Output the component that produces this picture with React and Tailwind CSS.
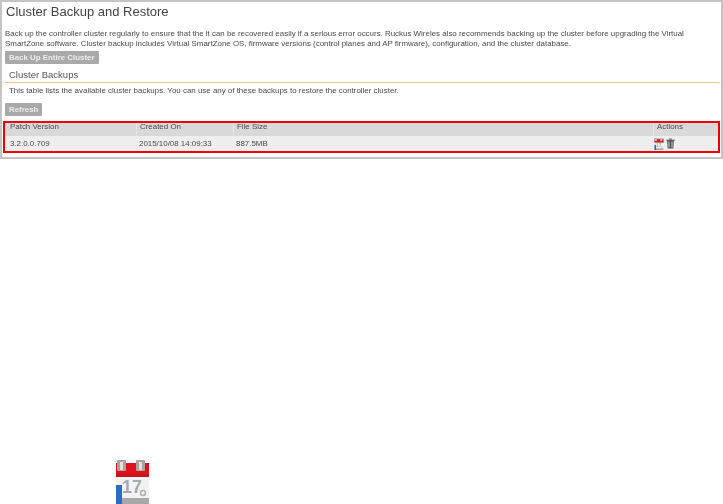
import React from "react";

function CalendarIcon({ className }) {
  return (
    <svg viewBox="0 0 33 44" className={className}>
      <rect x="0" y="3" width="33" height="14" fill="#e0101c" />
      <rect x="0" y="14" width="33" height="3" fill="#c4141c" />
      <rect x="1" y="0" width="9" height="11" rx="1" fill="#a8a4a0" />
      <rect x="20" y="0" width="9" height="11" rx="1" fill="#a8a4a0" />
      <rect x="4" y="2" width="3" height="8" fill="#e4e0dc" />
      <rect x="23" y="2" width="3" height="8" fill="#e4e0dc" />
      <rect x="0" y="17" width="33" height="22" fill="#f2f2f2" />
      <rect x="0" y="38" width="33" height="6" fill="#a8a8a8" />
      <text x="6" y="33" fontSize="18" fontWeight="700" fill="#a4abb4" fontFamily="Liberation Sans, sans-serif">17</text>
      <circle cx="27" cy="33" r="2.5" fill="none" stroke="#b0b0b0" strokeWidth="1.5" />
      <path d="M0 25h6v19H0z" fill="#2a6cc4" />
    </svg>
  );
}

function TrashIcon({ className }) {
  return (
    <svg viewBox="0 0 10 12" className={className}>
      <path d="M0.5 1.8h9v1.2h-9z" fill="#444" />
      <path d="M3.5 0.5h3v1.3h-3z" fill="#666" />
      <path d="M1.3 3h7.4l-0.5 8.5h-6.4z" fill="#555" />
      <path d="M3.3 4v6.5M6.7 4v6.5" stroke="#ddd" strokeWidth="1" />
    </svg>
  );
}

function GrayButton({ children }) {
  return (
    <button className="block h-[13px] rounded-[1px] bg-[#a9a9a9] px-1 text-[7.9px] leading-[13px] font-bold text-[#ececec]">
      {children}
    </button>
  );
}

export default function App() {
  return (
    <div className="h-[504px] w-[723px] overflow-hidden bg-white font-['Liberation_Sans',Arial,sans-serif] blur-[0.5px]">
      <div className="h-[159px] border-2 border-[#c4c4c4] pt-[1px]">
        <h1 className="pl-1 text-[13px] leading-[18px] text-[#444]">Cluster Backup and Restore</h1>
        <p className="mt-[8px] pl-[3px] text-[7.93px] leading-[10px] text-[#4a4a4a]">
          Back up the controller cluster regularly to ensure that the it can be recovered easily if a serious error occurs. Ruckus Wireles also recommends backing up the cluster before upgrading the Virtual
          <br />
          SmartZone software. Cluster backup includes Virtual SmartZone OS, firmware versions (control planes and AP firmware), configuration, and the cluster database.
        </p>
        <div className="mt-[2px] pl-[3px]">
          <GrayButton>Back Up Entire Cluster</GrayButton>
        </div>
        <h2 className="mt-[4px] mr-[2px] ml-[3px] border-b border-[#fbc88c] pl-1 text-[9.5px] leading-[14px] text-[#555]">Cluster Backups</h2>
        <p className="mt-[3px] pl-[7px] text-[7.93px] leading-[9px] text-[#4a4a4a]">
          This table lists the available cluster backups. You can use any of these backups to restore the controller cluster.
        </p>
        <div className="mt-[8px] pl-[3px]">
          <GrayButton>Refresh</GrayButton>
        </div>
        <div className="mt-[5px] mr-[1px] ml-[1px] border-2 border-[#f00000] text-[7.93px] text-[#4a4a4a]">
          <div className="flex h-[13px] items-stretch bg-[#d9d9d9] leading-[8px]">
            <div className="w-[132px] border-r border-[#e6e6e6] pl-[5px]">Patch Version</div>
            <div className="w-[97px] border-r border-[#e6e6e6] pl-[3px]">Created On</div>
            <div className="w-[420px] border-r border-[#e6e6e6] pl-[3px]">File Size</div>
            <div className="flex-1 pl-[3px]">Actions</div>
          </div>
          <div className="flex h-[15px] items-center bg-[#eeeeee]">
            <div className="w-[132px] pl-[5px] leading-[14px]">3.2.0.0.709</div>
            <div className="w-[97px] pl-[2px] leading-[14px]">2015/10/08 14:09:33</div>
            <div className="w-[420px] pl-[2px] leading-[14px]">887.5MB</div>
            <div className="flex flex-1 items-center gap-[2px]">
              <CalendarIcon className="h-[12px] w-[10px]" />
              <TrashIcon className="h-[11px] w-[9px]" />
            </div>
          </div>
        </div>
      </div>
      <div className="mt-[301px] ml-[116px]">
        <CalendarIcon className="h-[44px] w-[33px]" />
      </div>
    </div>
  );
}
